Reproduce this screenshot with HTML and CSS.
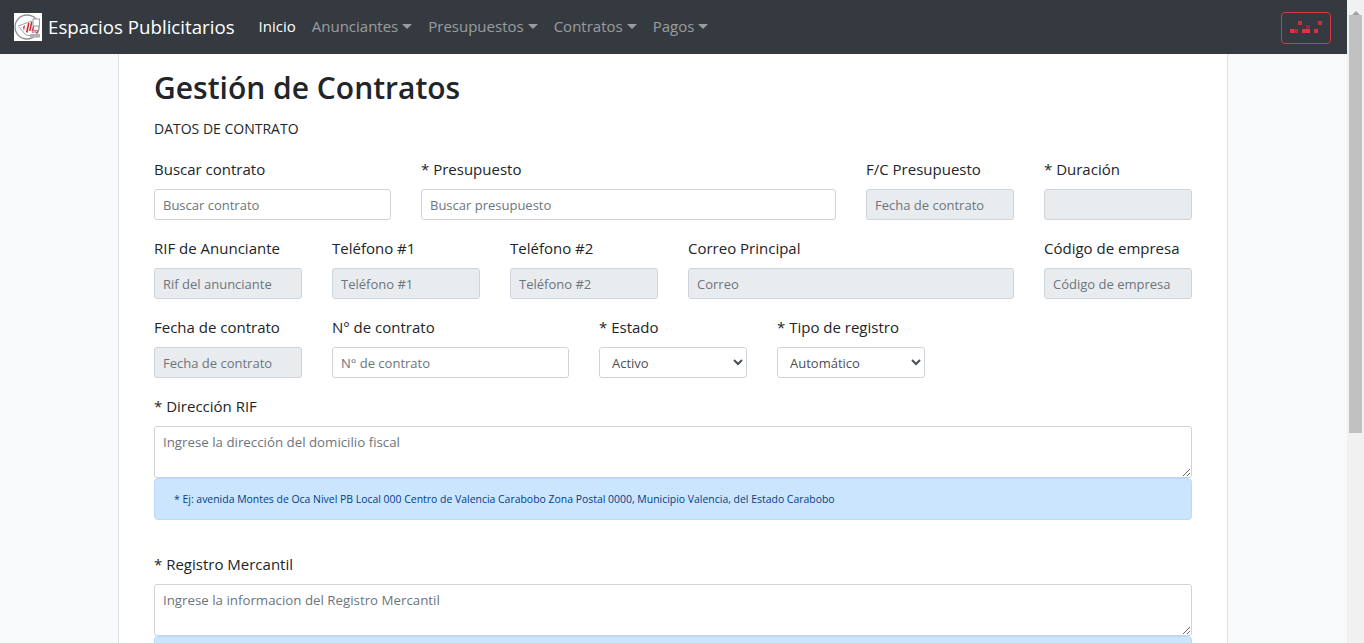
FILE: index.html
```html
<!DOCTYPE html>
<html lang="es">
<head>
  <meta charset="UTF-8" />
  <title>Gestión de Contratos</title>
  <link rel="stylesheet" href="styles.css">
</head>
<body>

<div class="page">
  <nav class="navbar">
    <a class="brand" href="#">
      <svg class="brand-logo" viewBox="0 0 28 28" xmlns="http://www.w3.org/2000/svg">
        <rect width="28" height="28" fill="#fff"/>
        <circle cx="13" cy="14" r="12" fill="none" stroke="#8f8f8f" stroke-width="1.3"/>
        <path d="M4 13 L18 8 M5 14 L12 22 L24 24" fill="none" stroke="#a0a0a0" stroke-width="1"/>
        <path d="M9 14 L11 12 L10 18 Z M12 19 L14 10 L15.5 10 L13.5 20 Z M15 18 L17 9 L18.5 9 L16.5 18 Z M18 17 L19.5 11 L20.5 11 L19.5 17 Z" fill="#d3202c"/>
        <rect x="19" y="6" width="6.5" height="7" fill="#fff" stroke="#9a9a9a"/>
        <text x="17.5" y="19.5" class="logo-text">tro</text>
        <rect x="16" y="21" width="10" height="3.5" fill="#b0b0b0"/>
      </svg>
      Espacios Publicitarios
    </a>
    <ul class="nav-links">
      <li><a class="active" href="#">Inicio</a></li>
      <li><a class="dropdown" href="#">Anunciantes</a></li>
      <li><a class="dropdown" href="#">Presupuestos</a></li>
      <li><a class="dropdown" href="#">Contratos</a></li>
      <li><a class="dropdown" href="#">Pagos</a></li>
    </ul>
    <button class="user-btn" type="button" aria-label="Usuario">
      <svg width="32" height="12" viewBox="0 0 32 12" xmlns="http://www.w3.org/2000/svg">
        <rect x="8" y="0" width="4" height="4" fill="#c8303f"/>
        <rect x="28" y="0" width="4" height="4" fill="#c8303f"/>
        <rect x="16" y="4" width="4" height="4" fill="#7c3340"/>
        <rect x="0" y="8" width="4" height="4" fill="#e82e42"/>
        <rect x="4" y="8" width="4" height="4" fill="#a83340"/>
        <rect x="12" y="8" width="8" height="4" fill="#e82e42"/>
        <rect x="24" y="8" width="4" height="4" fill="#e0303f"/>
      </svg>
    </button>
  </nav>

  <main class="container">
    <h1>Gestión de Contratos</h1>
    <p class="subtitle">DATOS DE CONTRATO</p>

    <form>
      <div class="form-row">
        <div class="col-3">
          <label>Buscar contrato</label>
          <input type="text" placeholder="Buscar contrato">
        </div>
        <div class="col-5">
          <label>* Presupuesto</label>
          <input type="text" placeholder="Buscar presupuesto">
        </div>
        <div class="col-2">
          <label>F/C Presupuesto</label>
          <input type="text" placeholder="Fecha de contrato" disabled>
        </div>
        <div class="col-2">
          <label>* Duración</label>
          <input type="text" disabled>
        </div>
      </div>

      <div class="form-row">
        <div class="col-2">
          <label>RIF de Anunciante</label>
          <input type="text" placeholder="Rif del anunciante" disabled>
        </div>
        <div class="col-2">
          <label>Teléfono #1</label>
          <input type="text" placeholder="Teléfono #1" disabled>
        </div>
        <div class="col-2">
          <label>Teléfono #2</label>
          <input type="text" placeholder="Teléfono #2" disabled>
        </div>
        <div class="col-4">
          <label>Correo Principal</label>
          <input type="text" placeholder="Correo" disabled>
        </div>
        <div class="col-2">
          <label>Código de empresa</label>
          <input type="text" placeholder="Código de empresa" disabled>
        </div>
      </div>

      <div class="form-row">
        <div class="col-2">
          <label>Fecha de contrato</label>
          <input type="text" placeholder="Fecha de contrato" disabled>
        </div>
        <div class="col-3">
          <label>N° de contrato</label>
          <input type="text" placeholder="N° de contrato">
        </div>
        <div class="col-2">
          <label>* Estado</label>
          <select>
            <option>Activo</option>
            <option>Inactivo</option>
          </select>
        </div>
        <div class="col-2">
          <label>* Tipo de registro</label>
          <select>
            <option>Automático</option>
            <option>Manual</option>
          </select>
        </div>
      </div>

      <div class="form-group">
        <label>* Dirección RIF</label>
        <textarea placeholder="Ingrese la dirección del domicilio fiscal"></textarea>
        <div class="alert">* Ej: avenida Montes de Oca Nivel PB Local 000 Centro de Valencia Carabobo Zona Postal 0000, Municipio Valencia, del Estado Carabobo</div>
      </div>

      <div class="form-group">
        <label>* Registro Mercantil</label>
        <textarea placeholder="Ingrese la informacion del Registro Mercantil"></textarea>
        <div class="alert"></div>
      </div>
    </form>
  </main>
</div>

<div class="scrollbar">
  <span class="scroll-arrow"></span>
  <div class="scroll-thumb"></div>
</div>

</body>
</html>
```

FILE: styles.css
```css
* { box-sizing: border-box; }

html, body {
  height: 100%;
}

body {
  margin: 0;
  display: flex;
  overflow: hidden;
  font-family: 'Open Sans', 'Noto Sans', sans-serif;
  font-size: 15px;
  line-height: 24px;
  color: #212529;
  background: #f8f9fa;
}

.page {
  flex: 1;
  min-width: 0;
  height: 100%;
  overflow: hidden;
}

/* barra superior */
.navbar {
  display: flex;
  align-items: center;
  height: 54px;
  padding: 0 16px 0 14px;
  background: #343a40;
}

.brand {
  display: flex;
  align-items: center;
  gap: 6px;
  margin-right: 24px;
  font-size: 18.7px;
  color: #fff;
  text-decoration: none;
}

.brand-logo {
  width: 28px;
  height: 28px;
}

.logo-text {
  font-family: 'Liberation Sans', sans-serif;
  font-size: 5px;
  font-style: italic;
  font-weight: bold;
  fill: #c8202c;
}

.nav-links {
  display: flex;
  gap: 16px;
  flex: 1;
  margin: 0 0 3px;
  padding: 0;
  list-style: none;
}

.nav-links a {
  font-size: 15px;
  color: rgba(255,255,255,0.5);
  text-decoration: none;
}

.nav-links a.active {
  color: #fff;
}

.dropdown::after {
  content: "";
  display: inline-block;
  margin-left: 4px;
  vertical-align: 3px;
  border-top: 5px solid;
  border-left: 5px solid transparent;
  border-right: 5px solid transparent;
}

.user-btn {
  display: flex;
  align-items: center;
  justify-content: center;
  width: 50px;
  height: 32px;
  margin-top: 2px;
  padding: 0 0 3px;
  background: transparent;
  border: 1px solid #dc3545;
  border-radius: 4px;
}

/* contenido */
.container {
  width: 1110px;
  margin-left: 118px;
  padding: 16px 35px 0;
  background: #fff;
  border-left: 1px solid #dee2e6;
  border-right: 1px solid #dee2e6;
}

h1 {
  margin: 0 0 12px;
  font-size: 30px;
  font-weight: 600;
  line-height: 36px;
}

.subtitle {
  margin: 0 0 18px;
  font-size: 14px;
  line-height: 21px;
}

.form-row {
  display: grid;
  grid-template-columns: repeat(12, 1fr);
  column-gap: 30px;
  margin-bottom: 16px;
}

.col-2 { grid-column: span 2; }
.col-3 { grid-column: span 3; }
.col-4 { grid-column: span 4; }
.col-5 { grid-column: span 5; }

label {
  display: block;
  margin-bottom: 8px;
}

input, select, textarea {
  display: block;
  width: 100%;
  height: 31px;
  padding: 4px 8px;
  font-family: inherit;
  font-size: 13px;
  line-height: 21px;
  color: #495057;
  background: #fff;
  border: 1px solid #ced4da;
  border-radius: 3px;
}

input::placeholder, textarea::placeholder {
  color: #6c757d;
}

input:disabled {
  background: #e9ecef;
}

textarea {
  height: 52px;
  padding-top: 5px;
  font-size: 13.3px;
}

.form-group {
  padding-bottom: 16px;
}

.alert {
  height: 42px;
  margin-bottom: 16px;
  padding: 10px 19px;
  font-size: 10.45px;
  line-height: 20px;
  color: #004085;
  background: #cce5ff;
  border: 1px solid #b8daff;
  border-radius: 4px;
}

/* barra de scroll */
.scrollbar {
  flex: none;
  width: 17px;
  height: 100%;
  padding: 0 2px;
  background: #f1f1f1;
}

.scroll-arrow {
  display: block;
  width: 0;
  height: 15px;
  margin: 0 auto;
  border-bottom: 4px solid #a3a3a3;
  border-left: 4px solid transparent;
  border-right: 4px solid transparent;
  border-top: 6px solid transparent;
}

.scroll-thumb {
  height: 418px;
  background: #c1c1c1;
}
```
